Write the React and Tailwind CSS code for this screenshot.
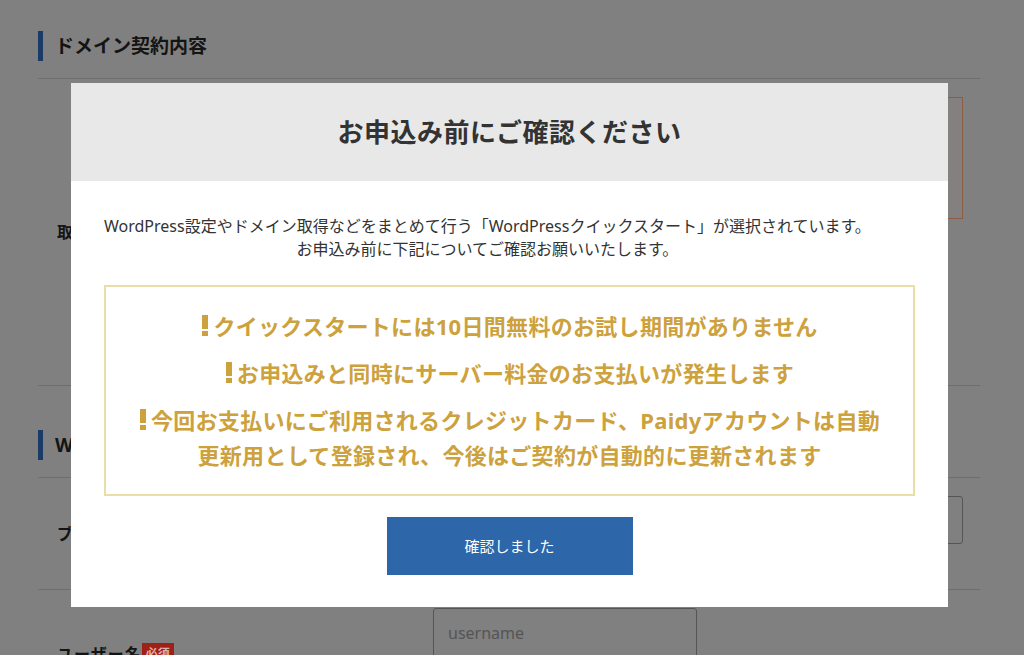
const notices = [
    ["クイックスタートには10日間無料のお試し期間がありません"],
    ["お申込みと同時にサーバー料金のお支払いが発生します"],
    ["今回お支払いにご利用されるクレジットカード、Paidyアカウントは自動", "更新用として登録され、今後はご契約が自動的に更新されます"],
]

function Bang() {
    return (
        <svg width="8" height="21" viewBox="0 0 8 21" className="mr-[4px] inline-block align-[-1px]">
            <rect x="1" y="0" width="6" height="14" fill="#cda13c" />
            <rect x="1" y="16" width="6" height="5" fill="#cda13c" />
        </svg>
    )
}

function SectionHeading({ children, top }) {
    return (
        <div className={`${top} border-b border-[#6e6e6e] pb-[17px]`}>
            <div className="flex h-[30px] items-center border-l-[5px] border-[#1c3a66] pl-[12px] text-[19px] font-bold text-[#141414]">
                {children}
            </div>
        </div>
    )
}

function Modal() {
    return (
        <div className="absolute left-[71px] top-[83px] w-[877px] bg-white">
            <div className="flex h-[98px] items-center justify-center bg-[#e8e8e8] text-[26px] font-bold tracking-[0.5px] text-[#333]">
                お申込み前にご確認ください
            </div>
            <div className="px-[33px] pb-[32px] pt-[34px]">
                <p className="w-fit text-center text-[16px] leading-[23px] text-[#333]">
                    WordPress設定やドメイン取得などをまとめて行う「WordPressクイックスタート」が選択されています。
                    <br />
                    お申込み前に下記についてご確認お願いいたします。
                </p>
                <div className="mt-[24px] space-y-[12px] border-2 border-[#e9dfa6] pb-[21px] pt-[22px] text-center text-[22px] font-bold leading-[35px] tracking-[0.3px] text-[#cda13c]">
                    {notices.map((lines, i) => (
                        <p key={i} className="whitespace-nowrap">
                            <Bang />
                            {lines.map((line, j) => (
                                <span key={j}>
                                    {j > 0 && <br />}
                                    {line}
                                </span>
                            ))}
                        </p>
                    ))}
                </div>
                <button className="mx-auto mt-[21px] block h-[58px] w-[246px] bg-[#2d66a9] text-[15px] text-white">
                    確認しました
                </button>
            </div>
        </div>
    )
}

export default function App() {
    return (
        <div className="relative h-[655px] w-[1024px] overflow-hidden bg-[#808080] font-['Noto_Sans','Noto_Sans_CJK_JP',sans-serif]">
            <div className="ml-[38px] w-[942px]">
                <SectionHeading top="pt-[31px]">ドメイン契約内容</SectionHeading>
                <div className="flex h-[307px] border-b border-[#6e6e6e] pr-[17px]">
                    <div className="flex w-[395px] items-center pl-[19px] text-[16px] font-bold text-[#141414]">
                        取得ドメイン名
                    </div>
                    <div className="flex-1">
                        <div className="mt-[18px] h-[122px] border border-[#8b5e44] bg-[#858080]" />
                    </div>
                </div>
                <SectionHeading top="pt-[44px]">WordPress情報</SectionHeading>
                <div className="flex h-[112px] border-b border-[#6e6e6e] pr-[17px]">
                    <div className="flex w-[395px] items-center pl-[19px] text-[16px] font-bold text-[#141414]">
                        ブログ名
                    </div>
                    <div className="flex-1 pt-[18px]">
                        <div className="h-[48px] w-full rounded-[3px] border border-[#555]" />
                    </div>
                </div>
                <div className="flex h-[140px] pr-[17px]">
                    <div className="flex w-[395px] items-start pl-[19px] pt-[52px] text-[16px] font-bold leading-[24px] tracking-[1px] text-[#141414]">
                        ユーザー名
                        <span className="mt-[1px] bg-[#9e2016] px-[4px] text-[12px] leading-[21px] tracking-normal text-[#e0b0a8]">
                            必須
                        </span>
                    </div>
                    <div className="flex-1 pt-[18px]">
                        <div className="flex h-[50px] w-[264px] items-center rounded-[3px] border-[1.5px] border-[#555] pl-[14px] text-[16px] text-[#555]">
                            username
                        </div>
                    </div>
                </div>
            </div>
            <Modal />
        </div>
    )
}
